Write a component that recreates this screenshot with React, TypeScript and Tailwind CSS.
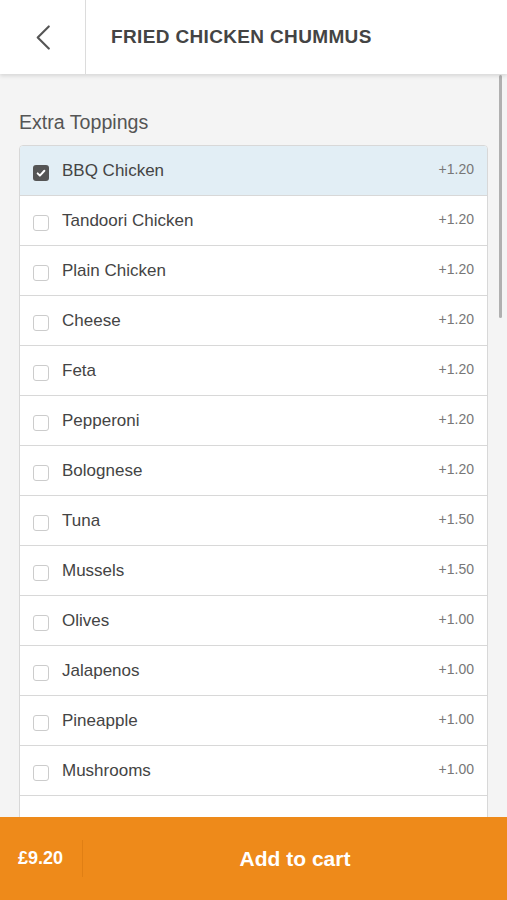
const toppings = [
    { name: "BBQ Chicken", price: "+1.20", checked: true },
    { name: "Tandoori Chicken", price: "+1.20" },
    { name: "Plain Chicken", price: "+1.20" },
    { name: "Cheese", price: "+1.20" },
    { name: "Feta", price: "+1.20" },
    { name: "Pepperoni", price: "+1.20" },
    { name: "Bolognese", price: "+1.20" },
    { name: "Tuna", price: "+1.50" },
    { name: "Mussels", price: "+1.50" },
    { name: "Olives", price: "+1.00" },
    { name: "Jalapenos", price: "+1.00" },
    { name: "Pineapple", price: "+1.00" },
    { name: "Mushrooms", price: "+1.00" },
]

function Checkbox({ checked }: { checked?: boolean }) {
    if (checked) {
        return (
            <span className="flex h-[16px] w-[16px] items-center justify-center rounded-[3px] bg-[#555]">
                <svg viewBox="0 0 16 16" className="h-[12px] w-[12px]" fill="none" stroke="#fff" strokeWidth="2.6" strokeLinecap="round" strokeLinejoin="round">
                    <path d="M3.5 8.5l3 3 6-6.5" />
                </svg>
            </span>
        )
    }
    return <span className="block h-[16px] w-[16px] rounded-[3px] border border-[#ccc] bg-white" />
}

export default function App() {
    return (
        <div className="relative flex h-[900px] w-full flex-col overflow-hidden bg-[#f4f4f4] font-['Liberation_Sans',Arial,sans-serif]">
            <header className="relative z-10 flex h-[74px] shrink-0 items-stretch bg-white shadow-[0_2px_4px_rgba(0,0,0,0.12)]">
                <div className="flex w-[86px] items-center justify-center border-r border-[#dcdcdc]">
                    <svg viewBox="0 0 16 26" className="ml-[1px] h-[25px] w-[16px]" fill="none" stroke="#555" strokeWidth="2.2" strokeLinecap="round" strokeLinejoin="round">
                        <path d="M14 1.5L2.5 13 14 24.5" />
                    </svg>
                </div>
                <h1 className="flex items-center pl-[25px] text-[19px] font-bold tracking-[0.35px] text-[#444]">
                    FRIED CHICKEN CHUMMUS
                </h1>
            </header>

            <main className="flex-1 overflow-hidden px-[19px]">
                <h2 className="pt-[37px] pb-[12px] text-[19.6px] leading-[22px] text-[#555]">Extra Toppings</h2>
                <ul className="overflow-hidden rounded-t-[4px] border border-[#d8d8d8] bg-white">
                    {toppings.map((t) => (
                        <li
                            key={t.name}
                            className={
                                t.checked
                                    ? "flex h-[50px] items-center border-b border-[#d8d8d8] bg-[#e2eef5] px-[13px]"
                                    : "flex h-[50px] items-center border-b border-[#d8d8d8] px-[13px]"
                            }>
                            <span className="mt-[4px]">
                                <Checkbox checked={t.checked} />
                            </span>
                            <span className="ml-[13px] flex-1 text-[17px] text-[#444]">{t.name}</span>
                            <span className="-mt-[3px] text-[14px] text-[#777]">{t.price}</span>
                        </li>
                    ))}
                    <li className="h-[50px]" />
                </ul>
            </main>

            <div className="absolute right-[5px] top-[75px] h-[243px] w-[3px] rounded-full bg-[#b0b0b0]" />

            <footer className="flex h-[83px] shrink-0 items-stretch bg-[#ee8a1a] text-white">
                <div className="flex w-[82px] items-center pl-[18px] text-[18px] font-bold">
                    £9.20
                </div>
                <div className="my-[23px] w-px bg-[#e07f14]" />
                <button className="flex flex-1 items-center justify-center text-[21px] font-bold">
                    Add to cart
                </button>
            </footer>
        </div>
    )
}
